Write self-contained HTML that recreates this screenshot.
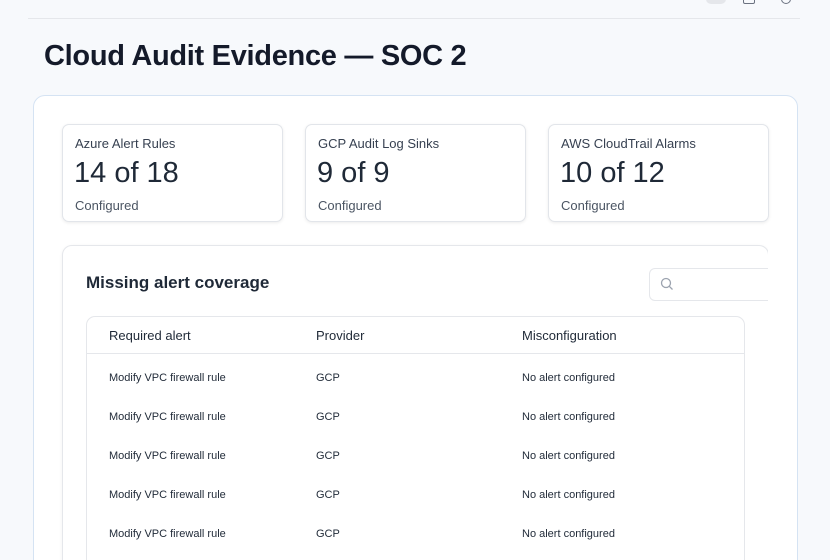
<!DOCTYPE html><html><head><style>
html,body{margin:0;width:830px;height:560px;overflow:hidden}
body{background:#f7f9fc;font-family:"Liberation Sans",sans-serif;color:#111827;position:relative}
.a{position:absolute}
.line{left:28px;top:18px;width:772px;height:1px;background:#e5e7eb}
h1{position:absolute;left:44px;top:40px;margin:0;font-size:29px;font-weight:700;letter-spacing:-0.3px;color:#141a2a}
.outer{left:33px;top:95px;width:763px;height:480px;border:1px solid #d5e3f3;border-radius:12px;background:#fff}
.stat{top:124px;width:219px;height:96px;border:1px solid #e2e5ea;border-radius:7px;background:#fff;box-shadow:0 1px 3px rgba(0,0,0,.08)}
.stat .t{position:absolute;left:12px;top:11px;font-size:13px;color:#374151}
.stat .v{position:absolute;left:11px;top:32px;font-size:29px;color:#1f2937}
.stat .c{position:absolute;left:12px;top:73px;font-size:13px;color:#4b5563}
.inner{left:62px;top:245px;width:705px;height:330px;border:1px solid #e5e7eb;border-radius:10px;background:#fff;box-shadow:0 1px 3px rgba(0,0,0,.06)}
.tbl{left:86px;top:316px;width:657px;height:260px;border:1px solid #e5e7eb;border-radius:9px}
.hd{font-size:13px;color:#1f2937;top:328px}
.r{font-size:11px;color:#1f2937}
</style></head><body>
<div class="a line"></div>
<div class="a" style="left:706px;top:-6px;width:20px;height:10px;border-radius:5px;background:#e5e7eb"></div>
<div class="a" style="left:743px;top:-6px;width:10px;height:8px;border:1.5px solid #6b7280;border-radius:2px"></div>
<div class="a" style="left:781px;top:-6px;width:8px;height:8px;border:1.5px solid #6b7280;border-radius:50%"></div>
<h1>Cloud Audit Evidence — SOC 2</h1>
<div class="a outer"></div>
<div class="a stat" style="left:62px"><div class="t">Azure Alert Rules</div><div class="v">14 of 18</div><div class="c">Configured</div></div>
<div class="a stat" style="left:305px"><div class="t">GCP Audit Log Sinks</div><div class="v">9 of 9</div><div class="c">Configured</div></div>
<div class="a stat" style="left:548px"><div class="t">AWS CloudTrail Alarms</div><div class="v">10 of 12</div><div class="c">Configured</div></div>
<div class="a inner"></div>
<div class="a" style="left:86px;top:273px;font-size:17px;font-weight:700;color:#1f2937">Missing alert coverage</div>
<div class="a" style="left:649px;top:268px;width:130px;height:31px;border:1px solid #e5e7eb;border-radius:6px;background:#fff"></div>
<svg class="a" style="left:660px;top:277px" width="14" height="14" viewBox="0 0 14 14"><circle cx="6" cy="6" r="4.5" fill="none" stroke="#9ca3af" stroke-width="1.3"/><path d="M9.3 9.3L12.5 12.5" stroke="#9ca3af" stroke-width="1.3"/></svg>
<div class="a" style="left:768px;top:240px;width:29px;height:330px;background:#fff"></div>
<div class="a tbl"></div>
<div class="a" style="left:87px;top:353px;width:657px;height:1px;background:#e5e7eb"></div>
<div class="a hd" style="left:109px">Required alert</div>
<div class="a hd" style="left:316px">Provider</div>
<div class="a hd" style="left:522px">Misconfiguration</div>
<div class="a r" style="left:109px;top:372px">Modify VPC firewall rule</div><div class="a r" style="left:316px;top:372px">GCP</div><div class="a r" style="left:522px;top:372px">No alert configured</div>
<div class="a r" style="left:109px;top:411px">Modify VPC firewall rule</div><div class="a r" style="left:316px;top:411px">GCP</div><div class="a r" style="left:522px;top:411px">No alert configured</div>
<div class="a r" style="left:109px;top:450px">Modify VPC firewall rule</div><div class="a r" style="left:316px;top:450px">GCP</div><div class="a r" style="left:522px;top:450px">No alert configured</div>
<div class="a r" style="left:109px;top:489px">Modify VPC firewall rule</div><div class="a r" style="left:316px;top:489px">GCP</div><div class="a r" style="left:522px;top:489px">No alert configured</div>
<div class="a r" style="left:109px;top:528px">Modify VPC firewall rule</div><div class="a r" style="left:316px;top:528px">GCP</div><div class="a r" style="left:522px;top:528px">No alert configured</div>
</body></html>
